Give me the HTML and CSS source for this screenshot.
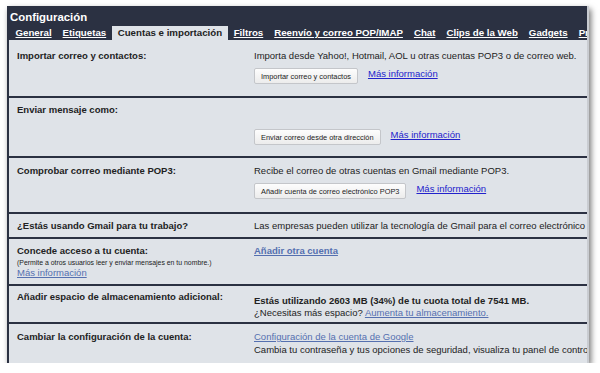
FILE: index.html
```html
<!DOCTYPE html>
<html lang="es">
<head>
    <meta charset="UTF-8">
    <title>Configuración</title>
    <link rel="stylesheet" href="styles.css">
</head>
<body>
    <div class="win">
        <div class="head">
            <h1 class="title">Configuración</h1>
            <ul class="tabs">
                <li><a href="#">General</a></li>
                <li><a href="#">Etiquetas</a></li>
                <li class="on">Cuentas e importación</li>
                <li><a href="#">Filtros</a></li>
                <li><a href="#">Reenvío y correo POP/IMAP</a></li>
                <li><a href="#">Chat</a></li>
                <li><a href="#">Clips de la Web</a></li>
                <li><a href="#">Gadgets</a></li>
                <li><a href="#">Privacidad</a></li>
            </ul>
        </div>
        <div class="body">
            <div class="row r1">
                <div class="lbl">Importar correo y contactos:</div>
                <div class="val">
                    <div>Importa desde Yahoo!, Hotmail, AOL u otras cuentas POP3 o de correo web.</div>
                    <div class="act"><button class="bt">Importar correo y contactos</button><a class="more" href="#">Más información</a></div>
                </div>
            </div>
            <div class="row r2">
                <div class="lbl">Enviar mensaje como:</div>
                <div class="val">
                    <div class="act"><button class="bt">Enviar correo desde otra dirección</button><a class="more" href="#">Más información</a></div>
                </div>
            </div>
            <div class="row r3">
                <div class="lbl">Comprobar correo mediante POP3:</div>
                <div class="val">
                    <div>Recibe el correo de otras cuentas en Gmail mediante POP3.</div>
                    <div class="act"><button class="bt">Añadir cuenta de correo electrónico POP3</button><a class="more" href="#">Más información</a></div>
                </div>
            </div>
            <div class="row r4">
                <div class="lbl">¿Estás usando Gmail para tu trabajo?</div>
                <div class="val">Las empresas pueden utilizar la tecnología de Gmail para el correo electrónico de su dominio.</div>
            </div>
            <div class="row r5">
                <div class="lbl">
                    Concede acceso a tu cuenta:
                    <div class="small">(Permite a otros usuarios leer y enviar mensajes en tu nombre.)</div>
                    <a class="soft" href="#">Más información</a>
                </div>
                <div class="val"><a class="soft strong" href="#">Añadir otra cuenta</a></div>
            </div>
            <div class="row r6">
                <div class="lbl">Añadir espacio de almacenamiento adicional:</div>
                <div class="val">
                    <div class="strong">Estás utilizando 2603 MB (34%) de tu cuota total de 7541 MB.</div>
                    <div>¿Necesitas más espacio? <a class="soft" href="#">Aumenta tu almacenamiento.</a></div>
                </div>
            </div>
            <div class="row r7">
                <div class="lbl">Cambiar la configuración de la cuenta:</div>
                <div class="val">
                    <div><a class="soft" href="#">Configuración de la cuenta de Google</a></div>
                    <div>Cambia tu contraseña y tus opciones de seguridad, visualiza tu panel de control de la cuenta.</div>
                </div>
            </div>
        </div>
    </div>
</body>
</html>
```

FILE: styles.css
```css
* {
    margin: 0;
    padding: 0;
    box-sizing: border-box;
}
body {
    background: #fff;
    font-family: "Liberation Sans", Arial, sans-serif;
    font-size: 9.5px;
    color: #222;
}
ul {
    list-style: none;
}
.win {
    width: 582px;
    height: 357px;
    margin: 6px 0 0 7px;
    overflow: hidden;
    background: #dfe3e8;
    border-right: 2px solid #c9ccd1;
    box-shadow: 2px 3px 6px rgba(0, 0, 0, 0.55);
    display: flex;
    flex-direction: column;
}
.head {
    background: #2b3142;
    padding-top: 3px;
}
.title {
    color: #fff;
    font-size: 11.4px;
    font-weight: bold;
    padding-left: 3px;
    line-height: 16px;
}
.tabs {
    display: flex;
    white-space: nowrap;
    margin-top: 1px;
    padding-left: 3px;
}
.tabs li {
    padding: 0 5.5px;
    line-height: 14px;
    font-size: 9.7px;
    font-weight: bold;
}
.tabs a {
    color: #fff;
}
.tabs .on {
    background: #dfe3e8;
    color: #222;
    padding: 0 6px;
}
.body {
    flex: 1;
    border-left: 2px solid #2b3142;
}
.row {
    display: flex;
    border-bottom: 2px solid #2b3142;
    line-height: 12px;
}
.lbl {
    width: 245px;
    flex-shrink: 0;
    padding-left: 8px;
    font-weight: bold;
}
.val {
    white-space: nowrap;
}
.act {
    display: flex;
    align-items: center;
    margin-top: 6px;
}
.bt {
    font-family: "Liberation Sans", Arial, sans-serif;
    font-size: 7.4px;
    color: #222;
    height: 16px;
    padding: 0 6px;
    border: 1px solid #c4c6ca;
    border-radius: 2px;
    background: linear-gradient(#fdfdfd, #ececec);
}
.more {
    color: #2222cc;
    margin: -4px 0 0 10px;
}
.soft {
    color: #5570b0;
}
.strong {
    font-weight: bold;
}
.small {
    font-size: 6.9px;
    font-weight: normal;
    line-height: 9px;
    margin-top: 1px;
}
.lbl .soft {
    font-weight: normal;
}
.r1 {
    height: 58px;
    padding-top: 10px;
}
.r2 {
    height: 60px;
    padding-top: 6px;
}
.r2 .act {
    margin-top: 25px;
}
.r3 {
    height: 56px;
    padding-top: 7px;
}
.r4 {
    height: 25px;
    padding-top: 6px;
}
.r5 {
    height: 47px;
    padding-top: 6px;
}
.r6 {
    height: 38px;
    padding-top: 5px;
}
.r6 .val {
    padding-top: 4px;
}
.r7 {
    border-bottom: 0;
    padding-top: 6px;
    line-height: 13px;
}
```
